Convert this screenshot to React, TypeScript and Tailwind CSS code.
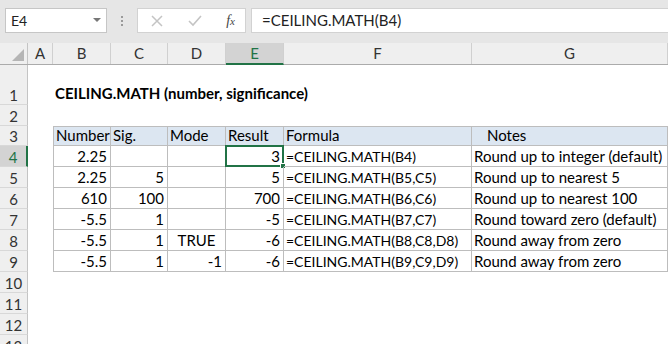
import React from "react"

const cols = [
  { id: "A", w: 25 },
  { id: "B", w: 58 },
  { id: "C", w: 57 },
  { id: "D", w: 58 },
  { id: "E", w: 58 },
  { id: "F", w: 188 },
  { id: "G", w: 196 },
]

type Cell = { v: string; align?: "l" | "r" | "c"; indent?: boolean }

const rows: Cell[][] = [
  [
    { v: "2.25", align: "r" },
    { v: "" },
    { v: "" },
    { v: "3", align: "r" },
    { v: "=CEILING.MATH(B4)" },
    { v: "Round up to integer (default)" },
  ],
  [
    { v: "2.25", align: "r" },
    { v: "5", align: "r" },
    { v: "" },
    { v: "5", align: "r" },
    { v: "=CEILING.MATH(B5,C5)" },
    { v: "Round up to nearest 5" },
  ],
  [
    { v: "610", align: "r" },
    { v: "100", align: "r" },
    { v: "" },
    { v: "700", align: "r" },
    { v: "=CEILING.MATH(B6,C6)" },
    { v: "Round up to nearest 100" },
  ],
  [
    { v: "-5.5", align: "r" },
    { v: "1", align: "r" },
    { v: "" },
    { v: "-5", align: "r" },
    { v: "=CEILING.MATH(B7,C7)" },
    { v: "Round toward zero (default)" },
  ],
  [
    { v: "-5.5", align: "r" },
    { v: "1", align: "r" },
    { v: "TRUE", align: "c" },
    { v: "-6", align: "r" },
    { v: "=CEILING.MATH(B8,C8,D8)" },
    { v: "Round away from zero" },
  ],
  [
    { v: "-5.5", align: "r" },
    { v: "1", align: "r" },
    { v: "-1", align: "r" },
    { v: "-6", align: "r" },
    { v: "=CEILING.MATH(B9,C9,D9)" },
    { v: "Round away from zero" },
  ],
]

const heads: Cell[] = [
  { v: "Number" },
  { v: "Sig." },
  { v: "Mode" },
  { v: "Result" },
  { v: "Formula" },
  { v: "Notes", indent: true },
]

function RowHead({ n, h, sel }: { n: number; h: string; sel?: boolean }) {
  return (
    <div
      className={`${h} w-[28px] shrink-0 flex items-end justify-center pb-[1px] border-b border-[#d8d8d8] ${
        sel ? "bg-[#d3d3d3] text-[#217346] border-r-2 border-r-[#217346]" : "bg-[#efefef] text-[#333] border-r border-r-[#c4c4c4]"
      }`}
    >
      {n}
    </div>
  )
}

export default function App() {
  return (
    <div className="w-[668px] h-[344px] overflow-hidden bg-white text-[15px] leading-none text-black" style={{ fontFamily: "Lato, 'Liberation Sans', sans-serif" }}>
      {/* formula bar */}
      <div className="h-[43px] bg-[#e6e6e6] flex items-start pt-[8px] pl-[5px]">
        <div className="w-[102px] h-[25px] bg-white border border-[#c6c6c6] flex items-center justify-between px-[5px] text-[14px] text-[#222]">
          <span>E4</span>
          <svg width="8" height="5" viewBox="0 0 8 5">
            <path d="M0 0 L8 0 L4 4 Z" fill="#777" />
          </svg>
        </div>
        <div className="w-[30px] h-[25px] flex flex-col items-center justify-center gap-[2px]">
          <span className="w-[2px] h-[2px] bg-[#9a9a9a]" />
          <span className="w-[2px] h-[2px] bg-[#9a9a9a]" />
          <span className="w-[2px] h-[2px] bg-[#9a9a9a]" />
        </div>
        <div className="w-[109px] h-[25px] bg-white border border-[#d2d2d2] flex items-center justify-between pl-[13px] pr-[10px]">
          <svg width="12" height="12" viewBox="0 0 12 12">
            <path d="M1 1 L11 11 M11 1 L1 11" stroke="#c4c4c4" strokeWidth="1.5" />
          </svg>
          <svg width="14" height="12" viewBox="0 0 14 12">
            <path d="M1 6 L5 10 L13 1" stroke="#c4c4c4" strokeWidth="1.6" fill="none" />
          </svg>
          <span className="italic text-[14px] text-[#444]" style={{ fontFamily: "'Liberation Serif', serif" }}>
            f<span className="text-[11px]">x</span>
          </span>
        </div>
        <div className="ml-[5px] flex-1 h-[25px] bg-white border border-[#d2d2d2] border-r-0 flex items-center pl-[10px] text-[15px] text-[#222]">
          =CEILING.MATH(B4)
        </div>
      </div>

      {/* column headers */}
      <div className="h-[22px] flex bg-[#efefef] border-b border-[#ababab]">
        <div className="w-[28px] shrink-0 border-r border-[#c4c4c4] flex items-end justify-end pr-[3px] pb-[3px]">
          <svg width="12" height="12" viewBox="0 0 12 12">
            <path d="M12 0 L12 12 L0 12 Z" fill="#b5b5b5" />
          </svg>
        </div>
        {cols.map((c) => (
          <div
            key={c.id}
            style={{ width: c.w }}
            className={`shrink-0 flex items-center justify-center border-r border-[#d0d0d0] ${
              c.id === "E" ? "bg-[#d3d3d3] text-[#217346] border-b-2 border-b-[#217346] -mb-[1px]" : "text-[#333]"
            }`}
          >
            {c.id}
          </div>
        ))}
      </div>

      {/* row 1 */}
      <div className="flex">
        <RowHead n={1} h="h-[40px]" />
        <div className="flex items-end pb-[4px] pl-[27px] font-bold text-[15px]">CEILING.MATH (number, significance)</div>
      </div>
      {/* row 2 */}
      <div className="flex">
        <RowHead n={2} h="h-[21px]" />
      </div>
      {/* row 3 table header */}
      <div className="flex">
        <RowHead n={3} h="h-[20px]" />
        <div className="w-[25px] shrink-0" />
        {heads.map((c, i) => (
          <div
            key={c.v}
            style={{ width: cols[i + 1].w }}
            className={`h-[20px] shrink-0 bg-[#dce6f1] border-t border-r border-b border-[#bdbdbd] flex items-end pb-[2px] ${
              i === 0 ? "border-l" : ""
            } ${c.indent ? "pl-[15px]" : "pl-[2px]"}`}
          >
            {c.v}
          </div>
        ))}
      </div>
      {rows.map((r, ri) => (
        <div key={ri} className="flex">
          <RowHead n={ri + 4} h="h-[21px]" sel={ri === 0} />
          <div className="w-[25px] shrink-0" />
          {r.map((c, i) => (
            <div
              key={i}
              style={{ width: cols[i + 1].w }}
              className={`relative h-[21px] shrink-0 border-r border-b border-[#bdbdbd] flex items-end pb-[2px] ${
                i === 0 ? "border-l" : ""
              } ${i === 4 ? "text-[14px]" : ""} ${
                c.align === "r" ? "justify-end pr-[3px]" : c.align === "c" ? "justify-center" : "pl-[2px]"
              }`}
            >
              {c.v}
              {ri === 0 && i === 3 && (
                <>
                  <div className="absolute -left-[1px] -top-[1px] w-[59px] h-[22px] border-2 border-[#217346]" />
                  <div className="absolute -right-[3px] -bottom-[3px] w-[6px] h-[6px] bg-[#217346] border border-white" />
                </>
              )}
            </div>
          ))}
        </div>
      ))}
      {[10, 11, 12, 13].map((n) => (
        <div key={n} className="flex">
          <RowHead n={n} h="h-[21px]" />
        </div>
      ))}
    </div>
  )
}
